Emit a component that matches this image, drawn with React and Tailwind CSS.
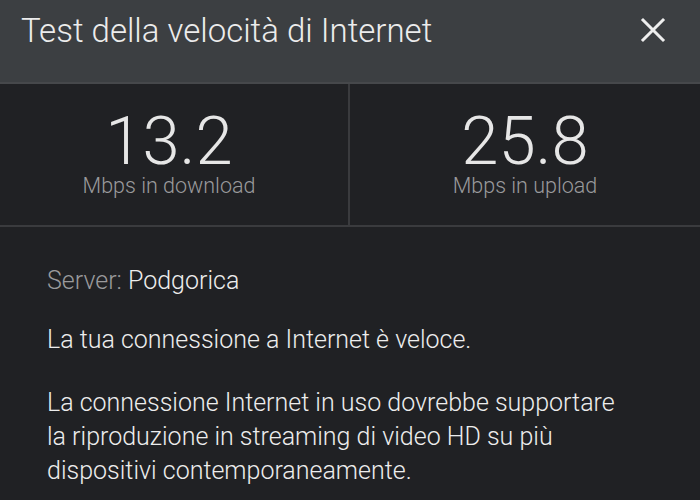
export default function App() {
  return (
    <div className="h-[500px] w-[700px] overflow-hidden bg-[#202124] font-['Roboto',sans-serif]">
      <header className="flex h-[84px] items-start justify-between border-b-2 border-[#46484b] bg-[#3c3f42] pl-[21px] pr-[34px] pt-[7px]">
        <h1 className="text-[33px] font-light leading-[48px] text-[#ececec]">Test della velocità di Internet</h1>
        <svg className="mt-[10px]" width="26" height="26" viewBox="0 0 26 26" fill="none" stroke="#eeeeee" strokeWidth="3" strokeLinecap="square">
          <path d="M3 3L23 23M23 3L3 23" />
        </svg>
      </header>
      <div className="grid grid-cols-2 border-b-2 border-[#3a3b3e]">
        <div className="flex flex-col items-center border-r-2 border-[#3a3b3e] pb-[28px] pr-[10px] pt-[24px]">
          <span className="text-[67px] font-light leading-none text-[#e6e6e6]">13.2</span>
          <span className="text-[21.5px] font-light leading-none text-[#9a9a9c]">Mbps in download</span>
        </div>
        <div className="flex flex-col items-center pb-[28px] pt-[24px]">
          <span className="text-[67px] font-light leading-none text-[#e6e6e6]">25.8</span>
          <span className="text-[21.5px] font-light leading-none text-[#9a9a9c]">Mbps in upload</span>
        </div>
      </div>
      <div className="flex flex-col px-[47px] pt-[37px] text-[25px] font-[350] leading-[34px] text-[#ededed]">
        <p>
          <span className="text-[#9a9a9c]">Server: </span>Podgorica
        </p>
        <p className="mt-[25px]">La tua connessione a Internet è veloce.</p>
        <p className="mt-[29px]">
          La connessione Internet in uso dovrebbe supportare
          <br />
          la riproduzione in streaming di video HD su più
          <br />
          dispositivi contemporaneamente.
        </p>
      </div>
    </div>
  );
}
